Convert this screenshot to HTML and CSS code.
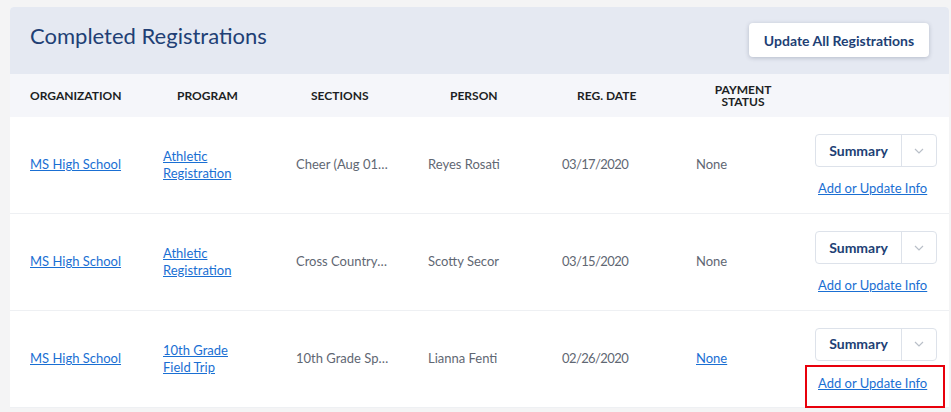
FILE: index.html
```html
<!DOCTYPE html>
<html>
<head>
<meta charset="utf-8">
<link rel="stylesheet" href="styles.css">
</head>
<body>
<div class="card">
  <div class="card-head">
    <h1 class="title">Completed Registrations</h1>
    <button class="btn-update">Update All Registrations</button>
  </div>
  <div class="grid head-row">
    <div class="h h-org">ORGANIZATION</div>
    <div class="h h-prog">PROGRAM</div>
    <div class="h h-sec">SECTIONS</div>
    <div class="h h-per">PERSON</div>
    <div class="h h-date">REG. DATE</div>
    <div class="h h-pay">PAYMENT<br>STATUS</div>
    <div></div>
  </div>

  <div class="grid row">
    <div class="cell"><a class="link" href="#">MS High School</a></div>
    <div class="cell"><a class="link" href="#">Athletic<br>Registration</a></div>
    <div class="cell txt ell">Cheer (Aug 01, 2020 - Nov 30, 2020)</div>
    <div class="cell txt">Reyes Rosati</div>
    <div class="cell txt date">03/17/2020</div>
    <div class="cell txt">None</div>
    <div class="actions">
      <div class="split"><span class="split-main">Summary</span><span class="split-arrow"><svg width="10" height="6" viewBox="0 0 10 6"><path d="M1 1l4 4 4-4" fill="none" stroke="#b9bfc8" stroke-width="1.2"/></svg></span></div>
      <a class="link act-link" href="#">Add or Update Info</a>
    </div>
  </div>

  <div class="grid row">
    <div class="cell"><a class="link" href="#">MS High School</a></div>
    <div class="cell"><a class="link" href="#">Athletic<br>Registration</a></div>
    <div class="cell txt ell">Cross Country (Aug 01, 2020)</div>
    <div class="cell txt">Scotty Secor</div>
    <div class="cell txt date">03/15/2020</div>
    <div class="cell txt">None</div>
    <div class="actions">
      <div class="split"><span class="split-main">Summary</span><span class="split-arrow"><svg width="10" height="6" viewBox="0 0 10 6"><path d="M1 1l4 4 4-4" fill="none" stroke="#b9bfc8" stroke-width="1.2"/></svg></span></div>
      <a class="link act-link" href="#">Add or Update Info</a>
    </div>
  </div>

  <div class="grid row">
    <div class="cell"><a class="link" href="#">MS High School</a></div>
    <div class="cell"><a class="link" href="#">10th Grade<br>Field Trip</a></div>
    <div class="cell txt ell">10th Grade Spring Trip</div>
    <div class="cell txt">Lianna Fenti</div>
    <div class="cell txt date">02/26/2020</div>
    <div class="cell"><a class="link" href="#">None</a></div>
    <div class="actions">
      <div class="split"><span class="split-main">Summary</span><span class="split-arrow"><svg width="10" height="6" viewBox="0 0 10 6"><path d="M1 1l4 4 4-4" fill="none" stroke="#b9bfc8" stroke-width="1.2"/></svg></span></div>
      <span class="mark act-link"><a class="link" href="#">Add or Update Info</a></span>
    </div>
  </div>
</div>
</body>
</html>
```
FILE: styles.css
```css
html, body { margin: 0; padding: 0; }
body {
  background: #f4f4f5;
  font-family: "Lato", "Open Sans", sans-serif;
  padding: 7px 0 0 10px;
  overflow: hidden;
}
.card {
  width: 939px;
  background: #fff;
  border-radius: 4px 4px 0 0;
}
.card-head {
  background: #e5e9f2;
  height: 67px;
  box-sizing: border-box;
  padding: 16px 20px 0 20px;
  display: flex;
  justify-content: space-between;
  align-items: flex-start;
  border-radius: 4px 4px 0 0;
}
.title {
  margin: 0;
  font-size: 22px;
  line-height: 26px;
  font-weight: 400;
  color: #213f75;
}
.btn-update {
  height: 34px;
  width: 180px;
  background: #fff;
  border: none;
  border-radius: 4px;
  box-shadow: 0 1px 4px rgba(40, 50, 80, 0.25);
  font-family: inherit;
  font-weight: 700;
  font-size: 14px;
  color: #213f75;
  padding: 0;
}
.grid {
  display: grid;
  grid-template-columns: 133px 133px 132px 134px 134px 119px 122px;
  padding: 0 12px 0 20px;
  align-items: center;
}
.head-row {
  background: #f5f6fa;
  height: 43px;
}
.h {
  font-size: 12px;
  font-weight: 700;
  color: #1d1f24;
  line-height: 12px;
}
.h-prog { padding-left: 14px; }
.h-sec { padding-left: 15px; }
.h-per { padding-left: 22px; }
.h-date { padding-left: 15px; }
.h-pay { padding-left: 17px; text-align: center; width: 60px; }
.row {
  height: 97px;
  border-bottom: 1px solid #eef0f3;
  box-sizing: border-box;
}
.cell { line-height: 16px; padding-bottom: 3px; }
.link {
  color: #1a6fd3;
  font-size: 13px;
  line-height: 16px;
  text-decoration: underline;
}
.txt {
  color: #5f6773;
  font-size: 13px;
}
.date { letter-spacing: -0.6px; }
.ell {
  white-space: nowrap;
  overflow: hidden;
  text-overflow: ellipsis;
  width: 93px;
}
.actions {
  display: flex;
  flex-direction: column;
  align-items: flex-start;
  gap: 13px;
  line-height: 16px;
}
.act-link { margin-left: 3px; }
.split {
  display: flex;
  height: 33px;
  width: 122px;
  box-sizing: border-box;
  border: 1px solid #dde2ea;
  border-radius: 4px;
}
.split-main {
  flex: 1;
  display: flex;
  align-items: center;
  justify-content: center;
  font-size: 14px;
  font-weight: 700;
  color: #213f75;
  border-right: 1px solid #dde2ea;
}
.split-arrow {
  width: 34px;
  display: flex;
  align-items: center;
  justify-content: center;
}
.mark { position: relative; }
.mark::after {
  content: "";
  position: absolute;
  left: -13px;
  right: -18px;
  top: -9px;
  bottom: -17px;
  border: 2px solid #e8000b;
}
```
